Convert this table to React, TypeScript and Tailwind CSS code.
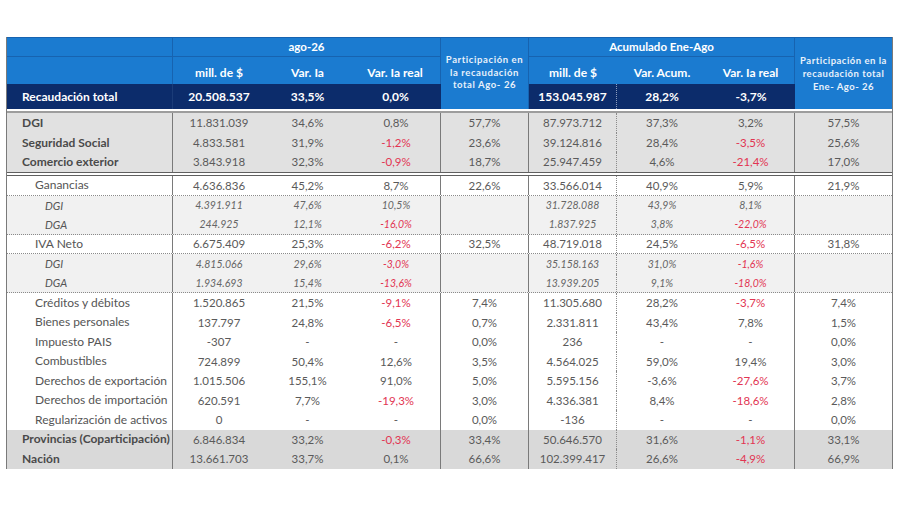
import React from "react";

const GRID = "grid grid-cols-[166px_92px_85px_91px_88px_88px_90px_88px_97px]";

const colCls = [
  "border-r border-[#7a7a7a] text-left",
  "text-center",
  "text-center",
  "border-r border-[#7a7a7a] text-center",
  "border-r border-[#7a7a7a] text-center",
  "border-r border-dotted border-[#8a8a8a] text-center",
  "text-center",
  "border-r border-[#7a7a7a] text-center",
  "text-center",
];

type Kind = "top" | "main" | "sub" | "plain" | "bottom";

type RowData = {
  label: string;
  v: string[];
  kind: Kind;
  red?: number[];
  dotted?: boolean;
};

const rowsTop: RowData[] = [
  { label: "DGI", v: ["11.831.039", "34,6%", "0,8%", "57,7%", "87.973.712", "37,3%", "3,2%", "57,5%"], kind: "top" },
  { label: "Seguridad Social", v: ["4.833.581", "31,9%", "-1,2%", "23,6%", "39.124.816", "28,4%", "-3,5%", "25,6%"], kind: "top", red: [3, 7] },
  { label: "Comercio exterior", v: ["3.843.918", "32,3%", "-0,9%", "18,7%", "25.947.459", "4,6%", "-21,4%", "17,0%"], kind: "top", red: [3, 7] },
];

const rowsMain: RowData[] = [
  { label: "Ganancias", v: ["4.636.836", "45,2%", "8,7%", "22,6%", "33.566.014", "40,9%", "5,9%", "21,9%"], kind: "main", dotted: true },
  { label: "DGI", v: ["4.391.911", "47,6%", "10,5%", "", "31.728.088", "43,9%", "8,1%", ""], kind: "sub" },
  { label: "DGA", v: ["244.925", "12,1%", "-16,0%", "", "1.837.925", "3,8%", "-22,0%", ""], kind: "sub", red: [3, 7], dotted: true },
  { label: "IVA Neto", v: ["6.675.409", "25,3%", "-6,2%", "32,5%", "48.719.018", "24,5%", "-6,5%", "31,8%"], kind: "main", red: [3, 7], dotted: true },
  { label: "DGI", v: ["4.815.066", "29,6%", "-3,0%", "", "35.158.163", "31,0%", "-1,6%", ""], kind: "sub", red: [3, 7] },
  { label: "DGA", v: ["1.934.693", "15,4%", "-13,6%", "", "13.939.205", "9,1%", "-18,0%", ""], kind: "sub", red: [3, 7], dotted: true },
  { label: "Créditos y débitos", v: ["1.520.865", "21,5%", "-9,1%", "7,4%", "11.305.680", "28,2%", "-3,7%", "7,4%"], kind: "main", red: [3, 7] },
  { label: "Bienes personales", v: ["137.797", "24,8%", "-6,5%", "0,7%", "2.331.811", "43,4%", "7,8%", "1,5%"], kind: "main", red: [3] },
  { label: "Impuesto PAIS", v: ["-307", "-", "-", "0,0%", "236", "-", "-", "0,0%"], kind: "main" },
  { label: "Combustibles", v: ["724.899", "50,4%", "12,6%", "3,5%", "4.564.025", "59,0%", "19,4%", "3,0%"], kind: "main" },
  { label: "Derechos de exportación", v: ["1.015.506", "155,1%", "91,0%", "5,0%", "5.595.156", "-3,6%", "-27,6%", "3,7%"], kind: "main", red: [7] },
  { label: "Derechos de importación", v: ["620.591", "7,7%", "-19,3%", "3,0%", "4.336.381", "8,4%", "-18,6%", "2,8%"], kind: "main", red: [3, 7] },
  { label: "Regularización de activos", v: ["0", "-", "-", "0,0%", "-136", "-", "-", "0,0%"], kind: "main" },
  { label: "Provincias (Coparticipación)", v: ["6.846.834", "33,2%", "-0,3%", "33,4%", "50.646.570", "31,6%", "-1,1%", "33,1%"], kind: "bottom", red: [3, 7] },
  { label: "Nación", v: ["13.661.703", "33,7%", "0,1%", "66,6%", "102.399.417", "26,6%", "-4,9%", "66,9%"], kind: "bottom", red: [7] },
];

function Row({ r }: { r: RowData }) {
  const bg =
    r.kind === "top" ? "bg-[#e1e1e1]" : r.kind === "bottom" ? "bg-[#d9d9d9]" : r.kind === "sub" ? "bg-[#f1f1f1]" : "bg-white";
  const h = r.kind === "top" ? "h-[19.7px]" : "h-[19.5px]";
  const dotted = r.dotted ? "border-b border-dotted border-[#8a8a8a]" : "";
  const labelCls =
    r.kind === "top" || r.kind === "bottom"
      ? "pl-[15px] font-bold text-[12px] text-[#4a4a4a]"
      : r.kind === "sub"
      ? "pl-[38px] italic text-[11px] text-[#555]"
      : "pl-[28px] text-[12px] text-[#555]";
  const numCls = r.kind === "sub" ? "italic text-[10.5px] text-[#666]" : "text-[11.5px] text-[#5a5a5a]";
  const cells = [r.label, ...r.v];
  return (
    <div className={`${GRID} ${bg} ${h} ${dotted}`}>
      {cells.map((c, i) => {
        const isRed = r.red?.includes(i);
        const pad = i === 3 ? "pl-[2px]" : "";
        return (
          <div
            key={i}
            className={`${colCls[i]} ${pad} flex items-center ${i === 0 ? "justify-start" : "justify-center"} leading-none whitespace-nowrap ${
              i === 0 ? labelCls : numCls
            } ${isRed ? "!text-[#e23552]" : ""}`}
          >
            {c}
          </div>
        );
      })}
    </div>
  );
}

export default function App() {
  const hb = "border-[#1763b0]";
  return (
    <div className="w-[900px] h-[505px] bg-white" style={{ fontFamily: "Lato, 'Liberation Sans', sans-serif" }}>
      <div className="pt-[37px]">
        <div className="ml-[6px] w-[887px] border-x border-[#7a7a7a]">
          {/* Header */}
          <div className={`${GRID} grid-rows-[19px_27px_25px] bg-[#1b7bd0] border-t ${hb} text-white font-bold`}>
            {/* row 1 */}
            <div className={`col-start-1 row-start-1 border-b border-r ${hb}`}></div>
            <div className={`col-start-2 col-span-3 row-start-1 border-b border-r ${hb} flex items-center justify-center text-[11.5px]`}>
              ago-26
            </div>
            <div className={`col-start-5 row-start-1 row-span-3 border-r ${hb} flex justify-center pt-[16px] text-[9.5px] leading-[12.5px] tracking-[0.6px] text-center text-[#e8f1fb]`}>
              <div>
                Participación en
                <br />
                la recaudación
                <br />
                total Ago- 26
              </div>
            </div>
            <div className={`col-start-6 col-span-3 row-start-1 border-b border-r ${hb} flex items-center justify-center text-[11.5px]`}>
              Acumulado Ene-Ago
            </div>
            <div className={`col-start-9 row-start-1 row-span-3 flex justify-center pt-[16px] text-[9.5px] leading-[13px] tracking-[0.5px] text-center text-[#e8f1fb]`}>
              <div>
                Participación en la
                <br />
                recaudación total
                <br />
                Ene- Ago- 26
              </div>
            </div>
            {/* row 2 */}
            <div className={`col-start-1 row-start-2 border-r ${hb}`}></div>
            <div className="col-start-2 row-start-2 flex items-center justify-center pt-[4px] text-[12px]">mill. de $</div>
            <div className="col-start-3 row-start-2 flex items-center justify-center pt-[4px] text-[12px]">Var. Ia</div>
            <div className={`col-start-4 row-start-2 border-r ${hb} flex items-center justify-center pt-[4px] text-[12px]`}>Var. Ia real</div>
            <div className="col-start-6 row-start-2 flex items-center justify-center pt-[4px] text-[12px]">mill. de $</div>
            <div className="col-start-7 row-start-2 flex items-center justify-center pt-[4px] text-[12px]">Var. Acum.</div>
            <div className={`col-start-8 row-start-2 border-r ${hb} flex items-center justify-center pt-[4px] text-[12px]`}>Var. Ia real</div>
            {/* row 3 navy */}
            <div className="col-start-1 row-start-3 col-span-4 grid grid-cols-[166px_92px_85px_91px] bg-[#0c2c6b] text-[12px]">
              <div className="flex items-center pl-[15px] border-r border-[#1b3c78]">Recaudación total</div>
              <div className="flex items-center justify-center">20.508.537</div>
              <div className="flex items-center justify-center">33,5%</div>
              <div className="flex items-center justify-center">0,0%</div>
            </div>
            <div className="col-start-6 row-start-3 col-span-3 grid grid-cols-[88px_90px_88px] bg-[#0c2c6b] text-[12px]">
              <div className="flex items-center justify-center border-r border-dotted border-[#8d9dbd]">153.045.987</div>
              <div className="flex items-center justify-center">28,2%</div>
              <div className="flex items-center justify-center">-3,7%</div>
            </div>
          </div>
          {/* separator after total */}
          <div className="h-[2px] bg-white"></div>
          <div className="h-[2px] bg-[#9d9d9d]"></div>
          {rowsTop.map((r, i) => (
            <Row key={i} r={r} />
          ))}
          <div className="h-[4px] border-y border-[#5f5f5f] bg-white"></div>
          {rowsMain.map((r, i) => (
            <Row key={i} r={r} />
          ))}
        </div>
      </div>
    </div>
  );
}
